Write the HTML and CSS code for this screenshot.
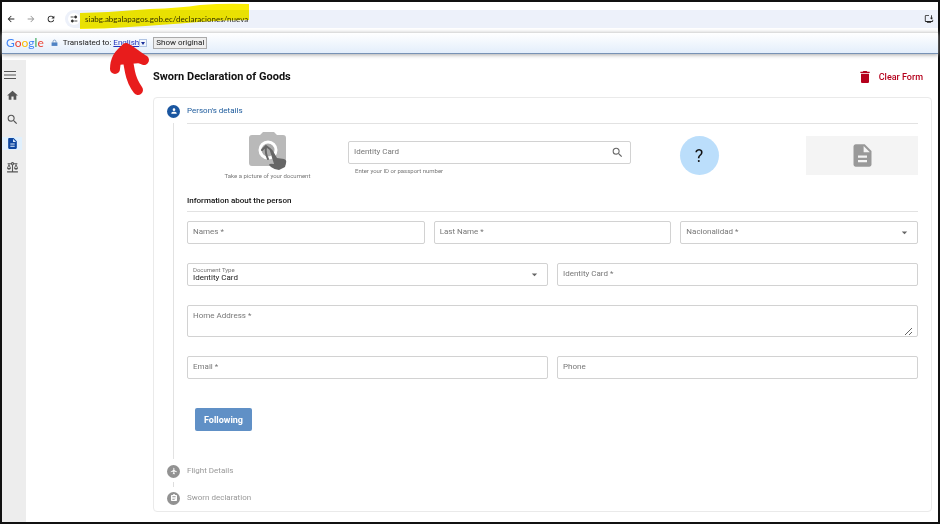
FILE: index.html
```
<!DOCTYPE html>
<html lang="en">
<head>
    <meta charset="utf-8">
    <title>Sworn Declaration of Goods</title>
    <link rel="stylesheet" href="styles.css">
</head>
<body>
<div class="window">
    <header class="toolbar">
        <button class="icon-btn" aria-label="Back"><svg viewBox="0 0 24 24"><path d="M20 11H7.8l5.6-5.6L12 4l-8 8 8 8 1.4-1.4L7.8 13H20z"/></svg></button>
        <button class="icon-btn muted" aria-label="Forward"><svg viewBox="0 0 24 24"><path d="M12 4l-1.4 1.4 5.6 5.6H4v2h12.2l-5.6 5.6L12 20l8-8z"/></svg></button>
        <button class="icon-btn" aria-label="Reload"><svg viewBox="0 0 24 24"><path d="M17.65 6.35A7.95 7.95 0 0 0 12 4a8 8 0 1 0 7.73 10h-2.08A6 6 0 1 1 12 6c1.66 0 3.14.69 4.22 1.78L13 11h7V4z"/></svg></button>
        <div class="address">
            <span class="tune"><svg viewBox="0 0 24 24" fill="none" stroke="#333" stroke-width="2.6"><path d="M2 6h9M13 18h9"/><circle cx="17" cy="6" r="3.2"/><circle cx="7" cy="18" r="3.2"/></svg></span>
            <input type="text" aria-label="Address" value="siabg.abgalapagos.gob.ec/declaraciones/nueva">
            <button class="icon-btn" aria-label="Install app"><svg viewBox="0 0 24 24"><path d="M12 3v2H4v12h16v-3h2v3a2 2 0 0 1-2 2h-3v2H7v-2H4a2 2 0 0 1-2-2V5a2 2 0 0 1 2-2zM17 3h2v6h3l-4 4-4-4h3z"/></svg></button>
        </div>
    </header>

    <div class="translate">
        <span class="google"><span class="b">G</span><span class="r">o</span><span class="y">o</span><span class="b">g</span><span class="g">l</span><span class="r">e</span></span>
        <svg class="lock" viewBox="0 0 24 24"><path fill="#4f83c4" d="M2 10h20v12H2z"/><path fill="none" stroke="#7898bd" stroke-width="3" d="M7 11V7a5 5 0 0 1 10 0v4"/></svg>
        <span>Translated to:</span>
        <a href="#">English</a>
        <button class="lang-btn" aria-label="Choose language"><svg viewBox="0 0 8 8"><path d="M0 2h8L4 8z"/></svg></button>
        <button class="original">Show original</button>
    </div>

    <div class="page">
        <nav class="sidebar">
            <a href="#" class="menu" aria-label="Menu"><svg viewBox="0 0 12 12"><path d="M0 2h12v1H0zM0 5.5h12v1H0zM0 9h12v1H0z"/></svg></a>
            <a href="#" aria-label="Home"><svg viewBox="0 0 24 24"><path d="M10 20v-6h4v6h5v-8h3L12 3 2 12h3v8z"/></svg></a>
            <a href="#" aria-label="Search"><svg viewBox="0 0 24 24"><path d="M15.5 14h-.79l-.28-.27A6.47 6.47 0 0 0 16 9.5 6.5 6.5 0 1 0 9.5 16c1.61 0 3.09-.59 4.23-1.57l.27.28v.79l5 4.99L20.49 19zm-6 0C7.01 14 5 11.99 5 9.5S7.01 5 9.5 5 14 7.01 14 9.5 11.99 14 9.5 14z"/></svg></a>
            <a href="#" class="active" aria-label="Declarations"><svg viewBox="0 0 24 24"><path d="M14 2H6c-1.1 0-2 .9-2 2v16c0 1.1.89 2 1.99 2H18c1.1 0 2-.9 2-2V8zm2 16H8v-2h8zm0-4H8v-2h8zm-3-5V3.5L18.5 9z"/></svg></a>
            <a href="#" aria-label="Legal"><svg viewBox="0 0 24 24"><path d="M13 7.83A3 3 0 0 0 14.83 6H18l-3 7c0 1.66 1.57 3 3.5 3s3.5-1.34 3.5-3l-3-7h2V4h-6.17a3 3 0 0 0-5.66 0H3v2h2l-3 7c0 1.66 1.57 3 3.5 3S9 14.66 9 13L6 6h3.17A3 3 0 0 0 11 7.83V19H2v2h20v-2h-9zM20.37 13h-3.74l1.87-4.36zm-13 0H3.63L5.5 8.64zM12 6a1 1 0 1 1 0-2 1 1 0 0 1 0 2z"/></svg></a>
        </nav>

        <main>
            <div class="title">
                <h1>Sworn Declaration of Goods</h1>
                <button class="clear"><svg viewBox="0 0 24 24"><path d="M6 19c0 1.1.9 2 2 2h8c1.1 0 2-.9 2-2V7H6zM19 4h-3.5l-1-1h-5l-1 1H5v2h14z"/></svg>Clear Form</button>
            </div>

            <form class="card">
                <section class="step open">
                    <h2 class="step-head"><span class="dot"><svg viewBox="0 0 24 24"><path d="M12 12a4 4 0 1 0 0-8 4 4 0 0 0 0 8zm0 2c-2.67 0-8 1.34-8 4v2h16v-2c0-2.66-5.33-4-8-4z"/></svg></span>Person's details</h2>
                    <div class="step-body">
                        <div class="row intro">
                            <button type="button" class="photo">
                                <svg viewBox="0 0 40 40">
                                    <path fill="#b9b9b9" d="M4 4h8l3-3h11l3 3h6q3 0 3 3v25q0 3-3 3H4q-3 0-3-3V7q0-3 3-3z"/>
                                    <circle cx="20" cy="19" r="8" fill="#aaa" stroke="#fff" stroke-width="3"/>
                                    <path fill="#666" d="M22 20q-1-2 1-2 1 0 2 2l4 7 7 1q3 1 2 4l-1 4-6 3q-4 0-8-3l-2-2q0-2 5-1z"/>
                                    <path fill="none" stroke="#666" stroke-width="2" stroke-linecap="round" stroke-linejoin="round" d="M14 19l4-4 4 3M18 16q-1 6 2 12"/>
                                </svg>
                                Take a picture of your document
                            </button>
                            <div class="lookup">
                                <div class="field">
                                    <label for="search">Identity Card</label>
                                    <input type="text" id="search">
                                    <svg class="mark" viewBox="0 0 24 24"><path d="M15.5 14h-.79l-.28-.27A6.47 6.47 0 0 0 16 9.5 6.5 6.5 0 1 0 9.5 16c1.61 0 3.09-.59 4.23-1.57l.27.28v.79l5 4.99L20.49 19zm-6 0C7.01 14 5 11.99 5 9.5S7.01 5 9.5 5 14 7.01 14 9.5 11.99 14 9.5 14z"/></svg>
                                </div>
                                <small>Enter your ID or passport number</small>
                            </div>
                            <button type="button" class="help">?</button>
                            <div class="document"><svg viewBox="0 0 24 24"><path d="M14 2H6c-1.1 0-2 .9-2 2v16c0 1.1.89 2 1.99 2H18c1.1 0 2-.9 2-2V8zm2 16H8v-2h8zm0-4H8v-2h8zm-3-5V3.5L18.5 9z"/></svg></div>
                        </div>

                        <h3>Information about the person</h3>

                        <div class="row three">
                            <div class="field"><label for="names">Names *</label><input type="text" id="names"></div>
                            <div class="field"><label for="last">Last Name *</label><input type="text" id="last"></div>
                            <div class="field">
                                <label for="country">Nacionalidad *</label>
                                <select id="country"><option></option></select>
                                <svg class="mark" viewBox="0 0 24 24"><path d="M7 10l5 5 5-5z"/></svg>
                            </div>
                        </div>
                        <div class="row two">
                            <div class="field filled">
                                <label for="type">Document Type</label>
                                <select id="type"><option>Identity Card</option></select>
                                <svg class="mark" viewBox="0 0 24 24"><path d="M7 10l5 5 5-5z"/></svg>
                            </div>
                            <div class="field"><label for="card">Identity Card *</label><input type="text" id="card"></div>
                        </div>
                        <div class="row">
                            <div class="field"><label for="address">Home Address *</label><textarea id="address"></textarea></div>
                        </div>
                        <div class="row two">
                            <div class="field"><label for="email">Email *</label><input type="text" id="email"></div>
                            <div class="field"><label for="phone">Phone</label><input type="text" id="phone"></div>
                        </div>
                        <button type="button" class="next">Following</button>
                    </div>
                </section>

                <section class="step">
                    <h2 class="step-head"><span class="dot"><svg viewBox="0 0 24 24"><path d="M21 16v-2l-8-5V3.5a1.5 1.5 0 0 0-3 0V9l-8 5v2l8-2.5V19l-2 1.5V22l3.5-1 3.5 1v-1.5L13 19v-5.5z"/></svg></span>Flight Details</h2>
                    <div class="link"></div>
                </section>
                <section class="step">
                    <h2 class="step-head"><span class="dot"><svg viewBox="0 0 24 24"><path d="M19 3h-4a3 3 0 0 0-6 0H5a2 2 0 0 0-2 2v14c0 1.1.9 2 2 2h14c1.1 0 2-.9 2-2V5a2 2 0 0 0-2-2zm-5 14H7v-2h7zm3-4H7v-2h10zm0-4H7V7h10z"/></svg></span>Sworn declaration</h2>
                </section>
            </form>
        </main>
    </div>

    <!-- marker and arrow drawn over the browser bar -->
    <svg class="marker" viewBox="0 0 260 100">
        <path fill="#fbee02" d="M80 13q35-1 70-4 30-1 50-4 25-2 49-1v16q-25 0-50 2-38 3-70 5-25 2-49 2z"/>
    </svg>
    <svg class="arrow" viewBox="0 0 260 100">
        <path d="M115 69q0-13 11-20M126 48q6 8 18 12M126 50l4 22q2 10 8 18"/>
        <path class="head" d="M113 57l8-11q5-3 10-1l14 10-4 8-24 2z"/>
    </svg>
</div>
</body>
</html>
```
FILE: styles.css
```
* {
    box-sizing: border-box;
}

body {
    margin: 0;
    font-family: Roboto, Arial, sans-serif;
    font-size: 8px;
    line-height: 10px;
    color: #222;
    background: #fff;
}

button, input, select, textarea {
    font: inherit;
    color: inherit;
    margin: 0;
    padding: 0;
    border: none;
    background: none;
    outline: none;
}

svg {
    display: block;
    flex: none;
    fill: currentColor;
}

.window {
    position: relative;
    display: flex;
    flex-direction: column;
    min-height: 100vh;
    border: 2px solid #111;
}

/* browser bar */
.toolbar {
    display: flex;
    align-items: center;
    gap: 10px;
    padding: 8px 0 4px 4px;
}

.icon-btn svg {
    width: 10px;
    height: 10px;
}

.muted {
    color: #999;
}

.address {
    flex: 1;
    display: flex;
    align-items: center;
    height: 18px;
    margin-left: -1px;
    padding: 0 4px 0 3px;
    background: #edf1fa;
    border-radius: 9px 0 0 9px;
}

.address .tune {
    padding: 2px;
    border-radius: 50%;
    background: #fff;
}

.tune svg {
    width: 8px;
    height: 8px;
}

.address input {
    flex: 1;
    margin-left: 5px;
    font-family: Lato, sans-serif;
    color: #333;
}

.translate {
    display: flex;
    align-items: center;
    height: 22px;
    padding-left: 4px;
    border-top: 1px solid #ddd;
    border-bottom: 1px solid #7792b5;
    background: linear-gradient(#fff, #e3eefb);
    box-shadow: 0 1px 4px #aaa;
}

.google {
    font-family: Lato, sans-serif;
    font-size: 12px;
    line-height: 14px;
}

.b { color: #4285f4; }
.r { color: #ea4335; }
.y { color: #fbbc05; }
.g { color: #34a853; }

.lock {
    width: 7px;
    height: 8px;
    margin: 0 5px 0 7px;
}

.translate a {
    margin-left: 2px;
    color: #2233bb;
}

.lang-btn {
    padding: 1px;
    border: 1px solid #b0c4e4;
    color: #1a2f9c;
}

.lang-btn svg {
    width: 4px;
    height: 4px;
}

.original {
    margin-left: 6px;
    padding: 0 2px;
    border: 1px solid #aaa;
    background: #eee;
}

/* page */
.page {
    flex: 1;
    display: flex;
    padding-top: 6px;
}

.sidebar {
    width: 24px;
    padding-top: 9px;
    display: flex;
    flex-direction: column;
    gap: 11px;
    background: #ededed;
    color: #555;
}

.sidebar a {
    display: flex;
    justify-content: center;
    margin-right: 4px;
    color: inherit;
}

.sidebar svg {
    width: 13px;
    height: 13px;
}

.sidebar .menu {
    margin: 0 8px -3px 0;
}

.sidebar .menu svg {
    width: 12px;
    height: 12px;
}

.sidebar .active {
    color: #0d47a1;
    background: #e0f0fd;
}

main {
    flex: 1;
    padding: 9px 6px 7px 127px;
}

.title {
    display: flex;
    align-items: center;
    justify-content: space-between;
    height: 16px;
    padding-right: 9px;
}

h1 {
    margin: 0;
    font-size: 11px;
    font-weight: 700;
    color: #111;
}

.clear {
    display: flex;
    align-items: center;
    gap: 6px;
    font-size: 9px;
    font-weight: 500;
    color: #b5001c;
}

.clear svg {
    width: 16px;
    height: 16px;
}

.card {
    margin-top: 12px;
    padding: 6px 13px;
    border: 1px solid #eaeaea;
    border-radius: 4px;
}

.step-head {
    display: flex;
    align-items: center;
    gap: 7px;
    height: 14px;
    margin: 0;
    font-size: 8px;
    font-weight: 400;
    color: #999;
}

.dot {
    display: flex;
    align-items: center;
    justify-content: center;
    width: 13px;
    height: 13px;
    border-radius: 50%;
    color: #fff;
    background: #929292;
}

.dot svg {
    width: 8px;
    height: 8px;
}

.open .step-head {
    color: #1c5a9c;
}

.open .dot {
    background: #1a56a0;
}

.step-body {
    margin: 5px 0 5px 6px;
    padding-left: 13px;
    border-left: 1px solid #e2e2e2;
}

.link {
    height: 5px;
    margin: 4px 0 4px 6px;
    border-left: 1px solid #ddd;
}

.row {
    display: grid;
    gap: 9px;
    margin-bottom: 19px;
}

.two {
    grid-template-columns: 1fr 1fr;
}

.three {
    grid-template-columns: 1fr 1fr 1fr;
}

.intro {
    grid-template-columns: 161fr 283fr 136fr 151fr;
    gap: 0;
    height: 65px;
    margin-bottom: 8px;
    padding-top: 7px;
    border-top: 1px solid #e2e2e2;
}

.photo {
    display: flex;
    flex-direction: column;
    align-items: center;
    gap: 1px;
    font-size: 6px;
    line-height: 8px;
    color: #777;
}

.photo svg {
    width: 40px;
    height: 40px;
}

.lookup {
    padding-top: 10px;
}

.lookup small {
    display: block;
    padding: 3px 7px;
    font-size: 6px;
    line-height: 8px;
    color: #777;
}

.help {
    justify-self: center;
    width: 39px;
    height: 39px;
    margin-top: 5px;
    border-radius: 50%;
    background: #bbdefb;
    font-size: 18px;
    color: #111;
}

.document {
    display: flex;
    align-items: center;
    justify-content: center;
    justify-self: end;
    width: 74%;
    height: 39px;
    margin-top: 5px;
    background: #f4f4f4;
    color: #999;
}

.document svg {
    width: 27px;
    height: 27px;
}

h3 {
    margin: 0 0 9px;
    padding-bottom: 5px;
    border-bottom: 1px solid #e2e2e2;
    font-size: 8px;
    font-weight: 500;
    color: #111;
}

.field {
    position: relative;
    border: 1px solid #d2d2d2;
    border-radius: 2px;
}

.field label {
    position: absolute;
    left: 5px;
    top: 5px;
    color: #777;
}

.field input, .field select, .field textarea {
    display: block;
    width: 100%;
    height: 21px;
    padding: 0 5px;
    appearance: none;
}

.field textarea {
    width: calc(100% - 4px);
    height: 30px;
    resize: vertical;
}

.field .mark {
    position: absolute;
    right: 6px;
    top: 4px;
    width: 13px;
    height: 13px;
    color: #666;
    pointer-events: none;
}

.filled label {
    top: 2px;
    font-size: 6px;
    line-height: 8px;
}

.filled select {
    padding-top: 7px;
}

.next {
    height: 23px;
    margin: 10px 0 28px 8px;
    padding: 0 9px;
    border-radius: 2px;
    background: #6090c6;
    font-size: 9px;
    font-weight: 700;
    color: #fff;
}

/* hand-drawn marks */
.marker, .arrow {
    position: absolute;
    left: -2px;
    top: -2px;
    width: 260px;
    height: 100px;
    pointer-events: none;
}

.marker {
    mix-blend-mode: multiply;
}

.arrow {
    fill: none;
    stroke: #e81c1c;
    stroke-width: 10px;
    stroke-linecap: round;
}

.arrow .head {
    fill: #e81c1c;
    stroke: none;
}
```
